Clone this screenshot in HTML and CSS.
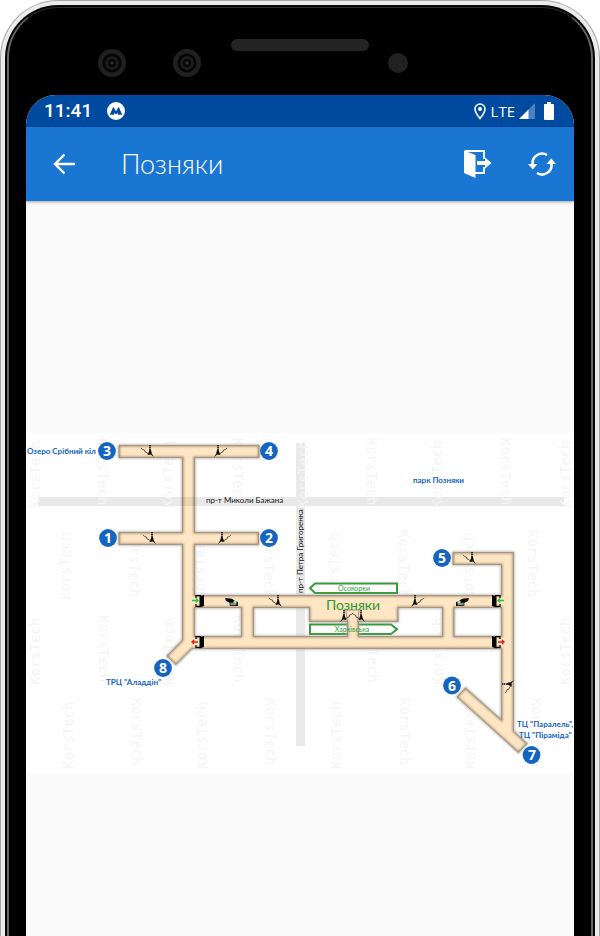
FILE: index.html
```html
<!DOCTYPE html>
<html lang="uk">
<head>
<meta charset="utf-8">
<meta name="viewport" content="width=device-width, initial-scale=1">
<title>Позняки</title>
<link rel="stylesheet" href="styles.css">
</head>
<body>
<div class="phone">
<div class="rim">
<div class="bezel">
  <div class="sensors">
    <svg class="lens" viewBox="0 0 28 28" aria-hidden="true"><circle cx="14" cy="14" r="14" fill="#202020"/><circle cx="14" cy="14" r="9.5" fill="#050505"/><circle cx="14" cy="14" r="7" fill="#1c1c1c"/><circle cx="14" cy="14" r="4" fill="#080808"/><circle cx="14" cy="14" r="1.5" fill="#383838"/></svg>
    <svg class="lens" viewBox="0 0 28 28" aria-hidden="true"><circle cx="14" cy="14" r="14" fill="#202020"/><circle cx="14" cy="14" r="9.5" fill="#050505"/><circle cx="14" cy="14" r="7" fill="#1c1c1c"/><circle cx="14" cy="14" r="4" fill="#080808"/><circle cx="14" cy="14" r="1.5" fill="#383838"/></svg>
    <span class="speaker"></span>
    <span class="proximity"></span>
  </div>
  <div class="screen">
    <div class="status">
      <span class="clock">11:41</span>
      <svg class="metro" viewBox="0 0 18 18" aria-hidden="true"><circle cx="9" cy="9" r="9" fill="#fff"/><path d="M2.8 12.7 6.3 4.8 9 9.2l2.700-4.400 3.500 7.900h-4.200l-.5-2.300L9 12.700l-1.500-2.300-.5 2.300z" fill="#004a9f"/></svg>
      <span class="grow"></span>
      <svg class="pin" viewBox="0 0 12 17" aria-hidden="true"><path d="M6 1C3.200 1 1 3.200 1 6c0 3.500 5 9.500 5 9.500S11 9.500 11 6c0-2.800-2.200-5-5-5z" fill="none" stroke="#fff" stroke-width="1.600"/><circle cx="6" cy="6" r="2" fill="#fff"/></svg>
      <span class="lte">LTE</span>
      <svg class="signal" viewBox="0 0 16 16" aria-hidden="true"><path d="M16 0v16H0z" fill="#4d80bc"/><path d="M9.500 6.500V16H0z" fill="#fff"/></svg>
      <svg class="battery" viewBox="0 0 10 18" aria-hidden="true"><path d="M3 0h4v2h2a1 1 0 0 1 1 1v14a1 1 0 0 1-1 1H1a1 1 0 0 1-1-1V3a1 1 0 0 1 1-1h2z" fill="#fff"/></svg>
    </div>
    <header class="bar">
      <button class="icon" type="button" aria-label="Назад"><svg width="22" height="22" viewBox="0 0 22 22"><path d="M22 11H2M11.500 1.500 2 11l9.500 9.500" fill="none" stroke="#fff" stroke-width="2.400"/></svg></button>
      <h1>Позняки</h1>
      <button class="icon" type="button" aria-label="Виходи"><svg width="28" height="30" viewBox="0 0 28 30"><path d="M1 2h19v8M20 18v6h-9" fill="none" stroke="#fff" stroke-width="1.800"/><path d="M0 1.500 11.500 6v23L0 24z" fill="#fff"/><path d="M13 12h8V8.500l6.500 5.500-6.500 5.500V16h-8z" fill="#fff"/></svg></button>
      <button class="icon" type="button" aria-label="Оновити"><svg width="28" height="24" viewBox="0 0 28 24"><path d="M4.700 12.500A9.500 9.500 0 0 1 19 3M23.300 11A9.500 9.500 0 0 1 9 21" fill="none" stroke="#fff" stroke-width="2.600"/><path d="M0 12h9.500L4.800 17.500zM18.500 12h9.500L23.200 6.500z" fill="#fff"/></svg></button>
    </header>
    <main class="content">
      <svg class="map" viewBox="26 433 548 341" role="img" aria-label="Схема станції Позняки">
        <defs>
          <path id="halls" fill-rule="evenodd" clip-rule="evenodd" d="M119 445.500H259V457.500H194.500V532.500H258.500V544.500H194.500V595.500H501.500V564.500H453V552.500H513.500V731L527 743.500 518.500 752.500 457 697 465.500 688 501.500 720V648.500H192L176 664.500 167 656 182.500 640V544.500H119V532.500H182.500V457.500H119ZM194.500 607.500V636.500H241.500V607.500ZM253.500 607.500V636.500H347.500V621.500H309.500V607.500ZM398 607.500V621.500H358.500V636.500H442.500V607.500ZM454 607.500V636.500H501.500V607.500Z"/>
          <clipPath id="inside"><use href="#halls"/></clipPath>
          <filter id="soft" x="-5%" y="-5%" width="110%" height="110%"><feGaussianBlur stdDeviation="1.200"/></filter>
          <g id="stairs"><path d="M1 0v6" fill="none" stroke="#111" stroke-width="1.600" stroke-dasharray="1.400 .5"/><path d="M.5 5 2 5l.8 3.500L5 12 1.800 9.500-1.500 10z" fill="#111"/><path d="M-1 9-2 7.500-4 7-4.500 5-6.500 4.500-8 2.800" fill="none" stroke="#554a3c" stroke-width=".9"/></g>
          <g id="gate"><path d="M1 3V.7h5M1 9v2.300h5" fill="none" stroke="#000" stroke-width="1.200"/><path d="m4.500 1.500 4.500-1.500v11l-4.500 1.500z" fill="#000"/></g>
          <g id="ticket"><path d="M0 0 7 .8l3 2.200 3 1v4H6V5.500L1 3z" fill="#080808"/><path d="M5 4.500h6.500v3H5z" fill="#8f8a76" stroke="#222" stroke-width=".8"/><path d="M8.500 3h3v2.500h-3z" fill="#8fe0a0"/></g>
        </defs>
        <rect x="26" y="433" width="548" height="341" fill="#fff"/>
        <g class="road"><path d="M38 497h526v9H38zM296 443h9v303h-9z"/></g>
        <g class="water">
          <text transform="translate(40 508) rotate(-90)">KorsTech</text><text transform="translate(98 438) rotate(90)">KorsTech</text><text transform="translate(173 508) rotate(-90)">KorsTech</text><text transform="translate(233 438) rotate(90)">KorsTech</text><text transform="translate(308 508) rotate(-90)">KorsTech</text><text transform="translate(367 438) rotate(90)">KorsTech</text><text transform="translate(442 508) rotate(-90)">KorsTech</text><text transform="translate(501 438) rotate(90)">KorsTech</text><text transform="translate(570 508) rotate(-90)">KorsTech</text>
          <text transform="translate(70 600) rotate(-90)">KorsTech</text><text transform="translate(130 530) rotate(90)">KorsTech</text><text transform="translate(205 600) rotate(-90)">KorsTech</text><text transform="translate(264 530) rotate(90)">KorsTech</text><text transform="translate(339 600) rotate(-90)">KorsTech</text><text transform="translate(399 530) rotate(90)">KorsTech</text><text transform="translate(473 600) rotate(-90)">KorsTech</text><text transform="translate(528 530) rotate(90)">KorsTech</text>
          <text transform="translate(40 685) rotate(-90)">KorsTech</text><text transform="translate(99 615) rotate(90)">KorsTech</text><text transform="translate(174 685) rotate(-90)">KorsTech</text><text transform="translate(234 615) rotate(90)">KorsTech</text><text transform="translate(368 615) rotate(90)">KorsTech</text><text transform="translate(443 685) rotate(-90)">KorsTech</text><text transform="translate(570 685) rotate(-90)">KorsTech</text>
          <text transform="translate(73 769) rotate(-90)">KorsTech</text><text transform="translate(132 698) rotate(90)">KorsTech</text><text transform="translate(207 769) rotate(-90)">KorsTech</text><text transform="translate(266 698) rotate(90)">KorsTech</text><text transform="translate(341 769) rotate(-90)">KorsTech</text><text transform="translate(400 698) rotate(90)">KorsTech</text><text transform="translate(475 769) rotate(-90)">KorsTech</text><text transform="translate(532 698) rotate(90)">KorsTech</text>
        </g>
        <path class="way" d="M315 583.500H397V593H315L310 588.200zM310 624.500H391L397 629.200 391 634H310z"/>
        <use href="#halls" fill="none" stroke="#aaa" stroke-width="2" filter="url(#soft)"/>
        <use href="#halls" fill="#fee6c4"/>
        <g clip-path="url(#inside)"><use href="#halls" fill="none" stroke="#a08c6c" stroke-width="2.200" filter="url(#soft)"/></g>
        <use href="#halls" fill="none" stroke="#8b7b65" stroke-width=".6"/>
        <path d="M343 610h19M346 611l1.500 11M359 611l-1.500 11" fill="none" stroke="#927e65" stroke-width=".8"/>
        <path d="M182 497h13v9h-13z" fill="#000" opacity=".08"/>
        <use href="#stairs" x="149" y="445"/><use href="#stairs" x="151" y="532"/><use href="#stairs" x="277" y="595"/><use href="#stairs" x="471" y="552"/>
        <use href="#stairs" transform="translate(219 445) scale(-1 1)"/><use href="#stairs" transform="translate(223 532) scale(-1 1)"/><use href="#stairs" transform="translate(416 595) scale(-1 1)"/>
        <use href="#stairs" transform="translate(345 610) scale(-1 1)"/><use href="#stairs" x="360" y="610"/>
        <use href="#stairs" transform="translate(502 685) rotate(-90)"/>
        <use href="#gate" x="195" y="595"/><use href="#gate" x="195" y="636"/>
        <use href="#gate" transform="translate(501 595) scale(-1 1)"/><use href="#gate" transform="translate(501 636) scale(-1 1)"/>
        <path d="M192 600.500h6m-2-2 2 2-2 2M504 600.500h-6m2-2-2 2 2 2" class="enter"/>
        <path d="M198 642h-6m2-2-2 2 2 2M498 642h6m-2-2 2 2-2 2" class="leave"/>
        <use href="#ticket" x="225" y="598"/><use href="#ticket" transform="translate(469 598) scale(-1 1)"/>
        <g class="street"><text x="206" y="503">пр-т Миколи Бажана</text><text transform="translate(303 593) rotate(-90)">пр-т Петра Григоренка</text></g>
        <g class="place"><text x="27" y="454">Озеро Срібний кіл</text><text x="413" y="483">парк Позняки</text><text x="106" y="685">ТРЦ "Аладдін"</text><text x="517" y="727">ТЦ "Паралель",</text><text x="519" y="738">ТЦ "Піраміда"</text></g>
        <g class="direction"><text x="354" y="591">Осокорки</text><text x="352" y="632">Харківська</text></g>
        <text class="station" x="353" y="610">Позняки</text>
        <g class="exit"><circle cx="107" cy="451" r="8.900"/><circle cx="269" cy="451" r="8.900"/><circle cx="108" cy="538" r="8.900"/><circle cx="269" cy="538" r="8.900"/><circle cx="442" cy="558" r="8.900"/><circle cx="452" cy="685.500" r="8.900"/><circle cx="531.500" cy="755" r="8.900"/><circle cx="163" cy="668" r="8.900"/></g>
        <g class="number"><text x="107" y="456">3</text><text x="269" y="456">4</text><text x="108" y="543">1</text><text x="269" y="543">2</text><text x="442" y="563">5</text><text x="452" y="691">6</text><text x="532" y="760">7</text><text x="163" y="673">8</text></g>
      </svg>
    </main>
  </div>
</div>
</div>
</div>
</body>
</html>
```

FILE: styles.css
```css
* { box-sizing: border-box; }
body { margin: 0; background: #fff; font-family: Lato, "Open Sans", sans-serif; }
.phone { height: 100vh; overflow: hidden; padding: 4px 4px 0; border: 1px solid #a8a8a8; border-bottom: 0; border-radius: 58px 58px 0 0; background: #ececec; }
.rim { height: 100%; border: 2px solid #080808; border-bottom: 0; border-radius: 53px 53px 0 0; background: #000; }
.bezel { display: flex; flex-direction: column; height: 100%; padding: 0 17px; border: 2px solid #686868; border-top: 1px solid #282828; border-bottom: 0; border-radius: 51px 51px 0 0; background: #000; }
.sensors { display: grid; flex: none; grid-template-columns: 72px 75px 58px 157px 1fr; height: 87px; padding-top: 29px; }
.sensors .lens:first-child { grid-column: 2; }
.lens { width: 28px; height: 28px; margin-top: 12px; }
.speaker { width: 138px; height: 12px; margin-top: 2px; border-radius: 6px; background: #242424; }
.proximity { width: 20px; height: 20px; margin-top: 16px; border-radius: 50%; background: #212121; }
.screen { display: flex; flex: 1; flex-direction: column; min-height: 0; overflow: hidden; border-radius: 30px 30px 0 0; background: #fafafa; }
.status { display: flex; flex: none; align-items: center; height: 32px; padding: 0 20px 0 18px; background: #004a9f; color: #fff; }
.clock { font: 500 19px/24px Roboto, sans-serif; }
.metro { width: 18px; height: 18px; margin-left: 15px; }
.grow { flex: 1; }
.pin { width: 12px; height: 17px; margin-right: 5px; }
.lte { margin-right: 4px; font: 15px/24px "Open Sans", sans-serif; }
.signal { width: 16px; height: 16px; margin-right: 9px; }
.battery { width: 10px; height: 18px; }
.bar { display: flex; z-index: 1; flex: none; align-items: center; height: 74px; padding: 0 18px 0 27px; background: #1976d3; box-shadow: 0 1px 3px rgba(0, 0, 0, .35); color: #fff; }
.icon { display: flex; padding: 0; border: 0; background: none; }
.icon + .icon { margin-left: 36px; }
h1 { flex: 1; margin: 0 0 0 46px; font-size: 27px; font-weight: 300; line-height: 32px; }
.content { display: flex; flex: 1; align-items: center; min-height: 0; }
.map { display: block; width: 100%; height: auto; margin-top: 69px; }
.road { fill: #e9e9e9; }
.water { fill: #f5f5f5; font: 14px "DejaVu Sans Mono", monospace; }
.way { fill: #fff; stroke: #339c38; stroke-width: 2; }
.enter { fill: none; stroke: #29c737; stroke-width: 1.4; }
.leave { fill: none; stroke: #f01818; stroke-width: 1.4; }
.street { fill: #151515; font-size: 8px; }
.place { fill: #1565c0; font-size: 8px; font-weight: 700; }
.direction { fill: #339c38; font-size: 7px; text-anchor: middle; }
.station { fill: #2d992f; font-size: 14px; text-anchor: middle; }
.exit { fill: #1565c0; }
.number { fill: #fff; font: 700 14px "Open Sans", sans-serif; text-anchor: middle; }
```
